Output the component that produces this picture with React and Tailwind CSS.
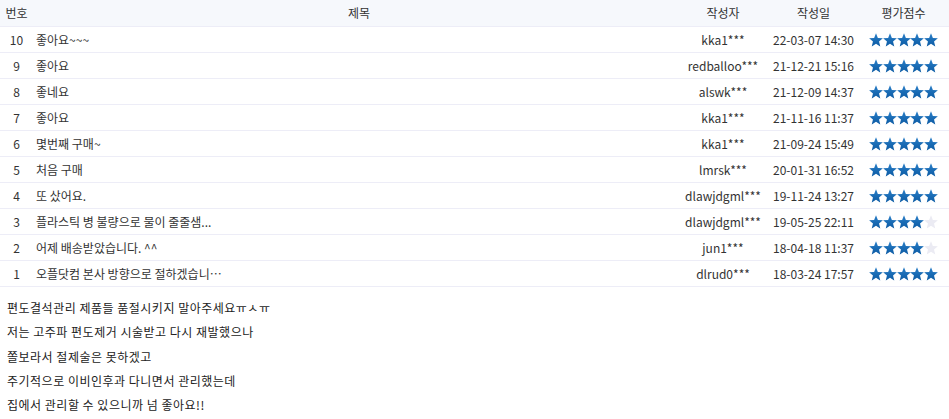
const reviews = [
  { no: 10, title: '좋아요~~~', writer: 'kka1***', date: '22-03-07 14:30', score: 5 },
  { no: 9, title: '좋아요', writer: 'redballoo***', date: '21-12-21 15:16', score: 5 },
  { no: 8, title: '좋네요', writer: 'alswk***', date: '21-12-09 14:37', score: 5 },
  { no: 7, title: '좋아요', writer: 'kka1***', date: '21-11-16 11:37', score: 5 },
  { no: 6, title: '몇번째 구매~', writer: 'kka1***', date: '21-09-24 15:49', score: 5 },
  { no: 5, title: '처음 구매', writer: 'lmrsk***', date: '20-01-31 16:52', score: 5 },
  { no: 4, title: '또 샀어요.', writer: 'dlawjdgml***', date: '19-11-24 13:27', score: 5 },
  { no: 3, title: '플라스틱 병 불량으로 물이 줄줄샘...', writer: 'dlawjdgml***', date: '19-05-25 22:11', score: 4 },
  { no: 2, title: '어제 배송받았습니다. ^^', writer: 'jun1***', date: '18-04-18 11:37', score: 4 },
  { no: 1, title: '오플닷컴 본사 방향으로 절하겠습니…', writer: 'dlrud0***', date: '18-03-24 17:57', score: 5 },
]

const lines = [
  '편도결석관리 제품들 품절시키지 말아주세요ㅠㅅㅠ',
  '저는 고주파 편도제거 시술받고 다시 재발했으나',
  '쫄보라서 절제술은 못하겠고',
  '주기적으로 이비인후과 다니면서 관리했는데',
  '집에서 관리할 수 있으니까 넘 좋아요!!',
]

const Star = ({ on }) => (
  <svg width="14" height="14" viewBox="0 0 24 24" className="-mx-[0.2px]">
    <defs>
      <linearGradient id="sg" x1="0" y1="0" x2="0" y2="1">
        <stop offset="0" stopColor="#2a7fc8" />
        <stop offset="1" stopColor="#0b5aa3" />
      </linearGradient>
    </defs>
    <polygon
      points="12,0.5 15.2,8.4 23.8,9 17.2,14.5 19.3,23 12,18.4 4.7,23 6.8,14.5 0.2,9 8.8,8.4"
      fill={on ? 'url(#sg)' : '#ebebf3'}
    />
  </svg>
)

const cols = 'grid grid-cols-[33px_652px_76px_105px_75px]'

export default function App() {
  return (
    <main
      className="w-[949px] bg-white text-[#333] text-[12px]"
      style={{ fontFamily: '"Noto Sans CJK KR", "Noto Sans", sans-serif' }}
    >
      <div className={`${cols} h-[27px] items-center bg-[#f6f8fc] border-b border-[#ededf7]`}>
        <div className="text-center">번호</div>
        <div className="text-center">제목</div>
        <div className="text-center">작성자</div>
        <div className="text-center">작성일</div>
        <div className="text-center">평가점수</div>
      </div>

      {reviews.map((r) => (
        <div key={r.no} className={`${cols} h-[26px] items-center border-b border-[#ededf7]`}>
          <div className="text-center">{r.no}</div>
          <div className="pl-[3px]">{r.title}</div>
          <div className="text-center">{r.writer}</div>
          <div className="text-center">{r.date}</div>
          <div className="flex justify-center">
            {[1, 2, 3, 4, 5].map((i) => (
              <Star key={i} on={i <= r.score} />
            ))}
          </div>
        </div>
      ))}

      <div className="pt-[9px] pl-[7px] text-[12px] tracking-[0.5px] leading-[24.3px] text-[#222]">
        {lines.map((l) => (
          <p key={l}>{l}</p>
        ))}
      </div>
    </main>
  )
}
